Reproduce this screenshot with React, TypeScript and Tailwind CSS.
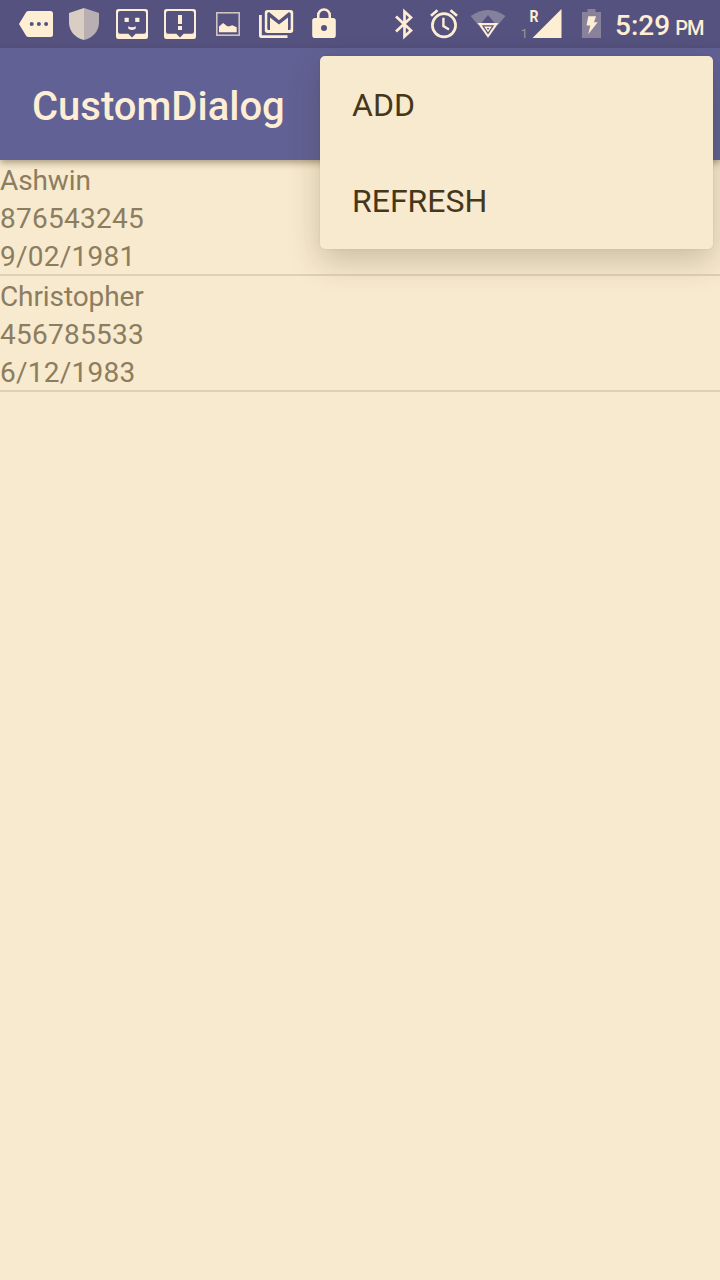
import type { ReactNode } from "react";

const people = [
  { name: "Ashwin", phone: "876543245", date: "9/02/1981" },
  { name: "Christopher", phone: "456785533", date: "6/12/1983" },
];

const actions = ["ADD", "REFRESH"];

function Glyph({ className = "w-12", width = 48, children }: { className?: string; width?: number; children: ReactNode }) {
  return (
    <svg className={`h-12 shrink-0 ${className}`} viewBox={`0 0 ${width} 48`} fill="currentColor">
      {children}
    </svg>
  );
}

function SpeechFrame() {
  return (
    <path
      fillRule="evenodd"
      d="M10.5 9h27A2.5 2.5 0 0 1 40 11.500v25a2.500 2.500 0 0 1-2.500 2.500h-27A2.500 2.500 0 0 1 8 36.500v-25A2.500 2.500 0 0 1 10.500 9ZM12 11a2 2 0 0 0-2 2v18.700a2 2 0 0 0 2 2h8.300L24 37.400l3.700-3.700H36a2 2 0 0 0 2-2V13a2 2 0 0 0-2-2Z"
    />
  );
}

function StatusBar() {
  return (
    <div className="flex h-12 items-start bg-[#555280] pl-3 text-[#fdeed4]">
      <Glyph>
        <path
          fillRule="evenodd"
          d="M16.500 11H38.500A2.500 2.500 0 0 1 41 13.500v21a2.500 2.500 0 0 1-2.500 2.500H16.500a3 3 0 0 1-2.400-1.200L7 24l7.100-11.800A3 3 0 0 1 16.500 11ZM19.700 22a2 2 0 1 0 0 4 2 2 0 0 0 0-4Zm7.200 0a2 2 0 1 0 0 4 2 2 0 0 0 0-4Zm7.200 0a2 2 0 1 0 0 4 2 2 0 0 0 0-4Z"
        />
      </Glyph>
      <Glyph>
        <path d="M24 8 9 13v9c0 9 5.500 15.500 15 18Z" fill="#dacdc3" />
        <path d="m24 8 15 5v9c0 9-5.500 15.500-15 18Z" fill="#b9aeb1" />
      </Glyph>
      <Glyph>
        <SpeechFrame />
        <rect x="16.600" y="17.700" width="4.200" height="4.300" rx=".5" />
        <rect x="27.200" y="17.700" width="4.200" height="4.300" rx=".5" />
        <path d="M20.200 26.300c2 1.200 5.600 1.200 7.600 0v2c-1.200 2.300-6.400 2.300-7.600 0Z" />
      </Glyph>
      <Glyph>
        <SpeechFrame />
        <path d="M22 15h4v9h-4zM22 26h4v4h-4z" />
      </Glyph>
      <Glyph>
        <rect x="12.800" y="12.800" width="22.400" height="22.400" fill="none" stroke="#cfc3be" strokeWidth="1.600" />
        <path d="M15 32.300V26.500l4.200-3.500 4 3.300h2.300l2.700-1 4.500 2v5Z" />
      </Glyph>
      <Glyph>
        <path d="M7 15h2.800v20.300h25.700V38H9.500A2.500 2.500 0 0 1 7 35.500Z" />
        <path
          fillRule="evenodd"
          d="M15.500 10h23a2.700 2.700 0 0 1 2.700 2.700v17.600a2.700 2.700 0 0 1-2.700 2.700h-23a2.700 2.700 0 0 1-2.700-2.700V12.700a2.700 2.700 0 0 1 2.700-2.700ZM15.300 13v15.500a1.500 1.500 0 0 0 1.500 1.500h1.200V17.500l9 7 9-7V30h1.200a1.500 1.500 0 0 0 1.500-1.500V13.500L37 12l-10 8.200L17 12Z"
        />
      </Glyph>
      <Glyph>
        <path
          fillRule="evenodd"
          d="M15 18h2v-2.800a7 7 0 0 1 14 0V18h2a2.800 2.800 0 0 1 2.800 2.800v14.400A2.800 2.800 0 0 1 33 38H15a2.800 2.800 0 0 1-2.800-2.800V20.800A2.800 2.800 0 0 1 15 18Zm4.500 0h9v-2.800a4.500 4.500 0 0 0-9 0ZM24 25a3 3 0 1 0 0 6 3 3 0 0 0 0-6Z"
        />
      </Glyph>

      <div className="ml-[36px] flex">
        <Glyph className="w-10" width={40}>
          <path d="m12 16.500 15 14-6.500 6V11.500l6.500 6L12 31.500" fill="none" stroke="currentColor" strokeWidth="2.700" />
        </Glyph>
        <Glyph className="w-10" width={40}>
          <g fill="none" stroke="currentColor" strokeWidth="2.700">
            <circle cx="20" cy="25.300" r="11.600" />
            <path d="M19.400 17.800v8.300l5.600 3.500" strokeWidth="2.400" />
            <path d="m7 15.700 6.500-5.400M33 15.700l-6.500-5.400" />
          </g>
        </Glyph>
        <Glyph className="w-12" width={48}>
          <path d="M6.700 16Q24 4 41.500 16L34 25H14Z" fill="#85819d" />
          <path d="M24 15 31 23.500H17Z" fill="#555280" />
          <path d="M13.500 23h21L24 38Z" />
          <path d="M17.800 25.300h12.400L24 34.500Z" fill="#555280" />
          <path d="M20 26.600h8L24 32.300Z" />
          <path d="M22.800 28h2.400L24 30Z" fill="#555280" />
        </Glyph>
      </div>
      <div className="ml-[6px] flex">
        <Glyph className="w-12" width={48}>
          <path d="M43.500 9v29H14.500Z" />
          <text x="11.400" y="21.700" fontFamily="Roboto, sans-serif" fontSize="16.500" fontWeight="700" textLength="9" lengthAdjust="spacingAndGlyphs">R</text>
          <text x="2.800" y="37.800" fontFamily="Roboto, sans-serif" fontSize="12.500" fill="#a39788">1</text>
        </Glyph>
        <Glyph className="ml-[12px] w-[28px]" width={28}>
          <path d="M9.500 9h8v3H23v26H4V12h5.500Z" fill="#88839b" />
          <path d="M10.300 16.300H18l-2 6h3.700L10.300 34.300l2-8.800H8.500Z" />
        </Glyph>
      </div>
      <div className="ml-[9px] flex h-12 items-baseline pt-[6px] font-medium whitespace-nowrap">
        <span className="text-[28px] leading-10">5:29</span>
        <span className="ml-[5px] text-[20px] leading-10 tracking-[-0.8px]">PM</span>
      </div>
    </div>
  );
}

export default function App() {
  return (
    <div className="relative h-[1280px] w-[720px] overflow-hidden bg-[#f8eacf] font-['Roboto',sans-serif]">
      <StatusBar />
      <header className="relative flex h-28 items-center bg-[#616195] px-8 pt-[6px] shadow-[0_3px_7px_rgba(60,45,15,0.4)]">
        <h1 className="text-[40px] font-medium text-[#fdeed4]">CustomDialog</h1>
      </header>
      <ul>
        {people.map((p) => (
          <li key={p.name} className="border-b-2 border-[#dfd1b7] text-[28px] leading-[38px] text-[#8c7d60]">
            <p className="h-[38px] pt-[2px] tracking-[-0.1px]">{p.name}</p>
            <p className="h-[38px] pt-[2px] tracking-[0.25px]">{p.phone}</p>
            <p className="h-[38px] pt-[2px] tracking-[0.25px]">{p.date}</p>
          </li>
        ))}
      </ul>
      <div className="absolute top-14 right-[7.500px] flex h-[192.500px] w-[392.500px] flex-col rounded-[5px] bg-[#f8eacf] shadow-[0_12px_32px_rgba(60,45,15,0.24),0_0_2px_rgba(60,45,15,0.12)]">
        {actions.map((a) => (
          <button key={a} className="flex h-24 items-center px-8 pt-[2px] text-left text-[32px] text-[#46371b]">
            {a}
          </button>
        ))}
      </div>
    </div>
  );
}
